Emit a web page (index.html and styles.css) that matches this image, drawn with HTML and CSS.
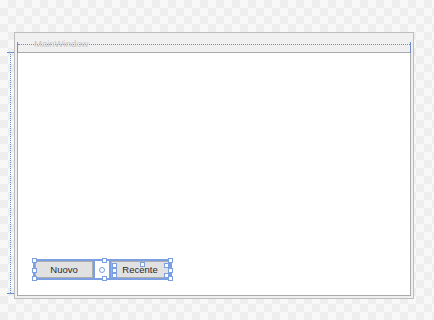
FILE: index.html
```html
<!DOCTYPE html>
<html lang="it">
<head>
<meta charset="utf-8">
<link rel="stylesheet" href="styles.css">
</head>
<body>
<div class="stage">
    <!-- guide a sinistra del form -->
    <div class="guide-v"></div>
    <div class="tick tick-top"></div>
    <div class="tick tick-bottom"></div>

    <div class="window">
        <div class="titlebar">
            <div class="guide-h"></div>
            <div class="tick-v tick-left"></div>
            <div class="tick-v tick-right"></div>
            <span class="title">MainWindow</span>
        </div>
        <div class="central">
            <div class="group">
                <div class="button nuovo">Nuovo</div>
                <div class="spacer"><span class="dot"></span></div>
                <div class="button recente">Recente</div>

                <span class="handle" style="left:-3px; top:-3px"></span>
                <span class="handle" style="left:-3px; top:7px"></span>
                <span class="handle" style="left:-3px; bottom:-3px"></span>
                <span class="handle" style="left:67px; top:-3px"></span>
                <span class="handle" style="left:67px; bottom:-3px"></span>
                <span class="handle" style="right:-3px; top:-3px"></span>
                <span class="handle" style="right:-3px; top:7px"></span>
                <span class="handle" style="right:-3px; bottom:-3px"></span>
                <span class="handle" style="left:105px; top:1px"></span>
                <span class="handle" style="left:77px; top:2px"></span>
                <span class="handle" style="left:77px; top:7px"></span>
                <span class="handle" style="left:77px; top:12px"></span>
                <span class="handle" style="right:1px; top:2px"></span>
                <span class="handle" style="right:1px; top:12px"></span>
            </div>
        </div>
    </div>
</div>
</body>
</html>
```

FILE: styles.css
```css
html, body {
    margin: 0;
    height: 100%;
}

body {
    font-family: "Liberation Sans", Arial, sans-serif;
    background-color: #f6f6f6;
    background-image: repeating-conic-gradient(#eeeeee 0 25%, #f8f8f8 0 50%);
    background-size: 16px 16px;
    overflow: hidden;
}

.stage {
    position: relative;
    padding: 32px 0 0 14px;
}

.window {
    position: relative;
    width: 400px;
    height: 267px;
    box-sizing: border-box;
    border: 1px solid #bdbdbd;
    background: #f0f0f0;
    display: flex;
    flex-direction: column;
    padding: 0 2px 2px 2px;
}

.titlebar {
    position: relative;
    height: 19px;
    line-height: 22px;
    padding-left: 17px;
    font-size: 9.5px;
    color: #c6c6c6;
}

.title {
    position: relative;
}

.central {
    flex: 1;
    background: #ffffff;
    border: 1px solid #aaaaaa;
    display: flex;
    align-items: flex-end;
    padding: 0 0 15px 15px;
}

/* guide del designer */
.guide-h {
    position: absolute;
    left: 1px;
    right: 1px;
    top: 11px;
    border-top: 1px dotted #6f8fc9;
}

.tick-v {
    position: absolute;
    top: 9px;
    width: 1px;
    height: 11px;
    background: #6f8fc9;
}

.tick-left { left: 0; }
.tick-right { right: 0; }

.guide-v {
    position: absolute;
    left: 10px;
    top: 52px;
    height: 241px;
    border-left: 1px dotted #6f8fc9;
}

.tick {
    position: absolute;
    left: 7px;
    width: 10px;
    height: 1px;
    background: #6f8fc9;
}

.tick-top { top: 52px; }
.tick-bottom { top: 293px; }

.group {
    position: relative;
    display: flex;
    border: 2px solid #7b9fe0;
    height: 17px;
}

.button {
    font-size: 9.5px;
    color: #2a2a2a;
    background: #e1e1e1;
    line-height: 15px;
    text-align: center;
    border: 1px solid #adadad;
}

.nuovo {
    width: 56px;
}

.spacer {
    width: 14px;
    background: #ffffff;
    border-left: 2px solid #7b9fe0;
    border-right: 2px solid #7b9fe0;
    display: flex;
    align-items: center;
    justify-content: center;
}

.dot {
    width: 4px;
    height: 4px;
    border: 1px solid #7b9fe0;
    border-radius: 50%;
}

.recente {
    width: 56px;
    border-right: 2px solid #7b9fe0;
}

.handle {
    position: absolute;
    width: 3px;
    height: 3px;
    background: #ffffff;
    border: 1px solid #7b9fe0;
}
```
